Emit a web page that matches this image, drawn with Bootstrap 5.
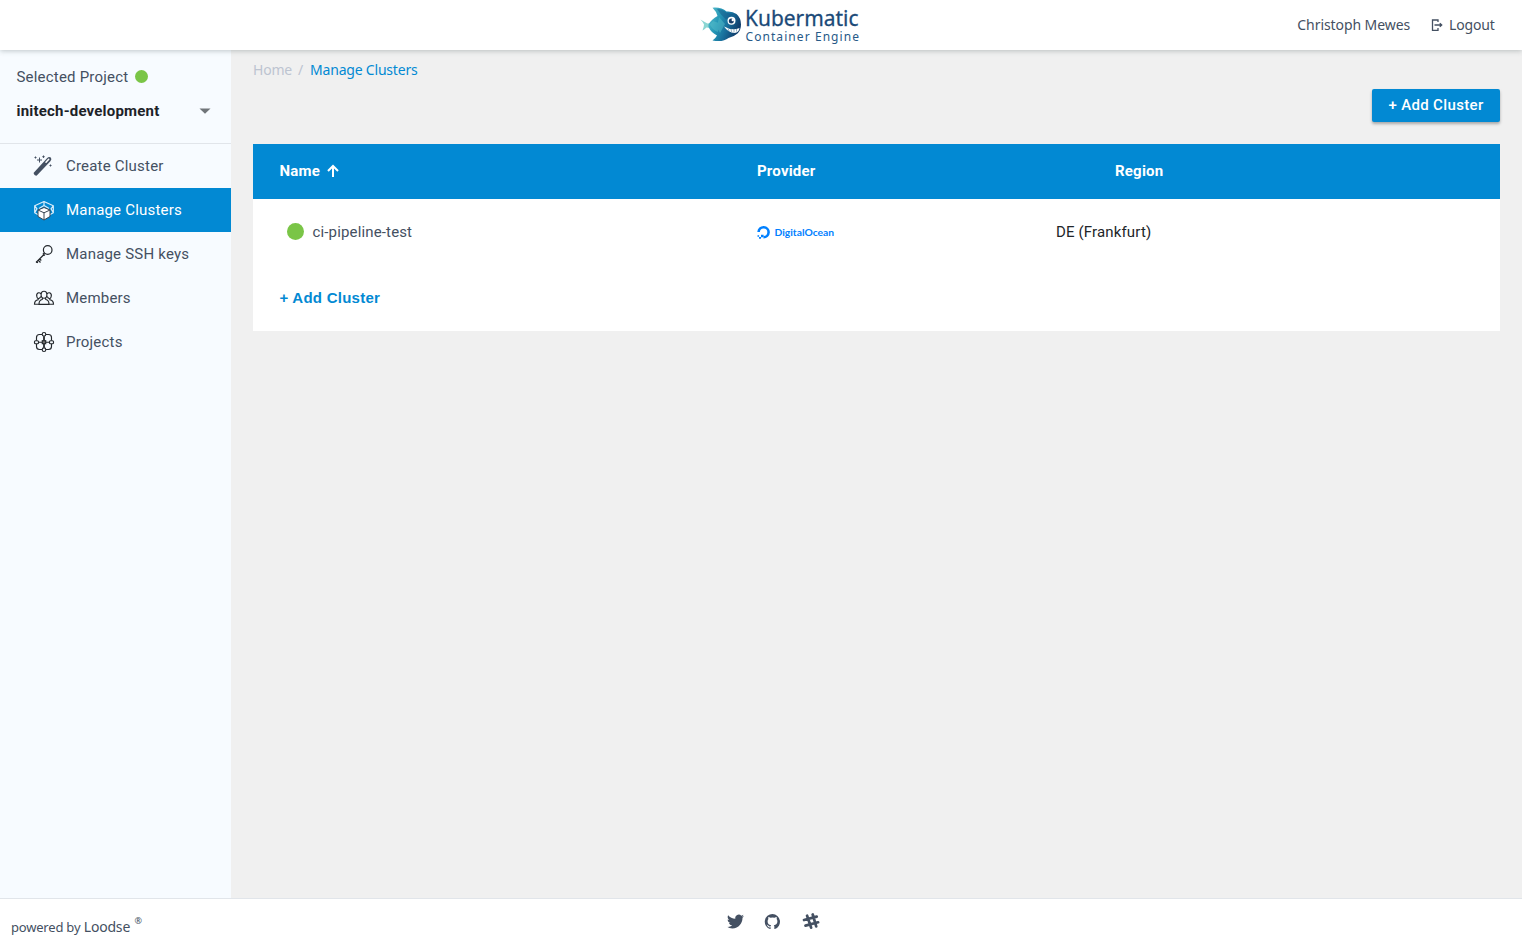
<!DOCTYPE html>
<html lang="en">
<head>
<meta charset="utf-8">
<meta name="viewport" content="width=device-width, initial-scale=1">
<title>Kubermatic Container Engine</title>
<link href="https://cdn.jsdelivr.net/npm/bootstrap@5.3.0/dist/css/bootstrap.min.css" rel="stylesheet">
<style>
:root{--kb:#0289d3;--ink:#445062}
body{font-family:Roboto,"Liberation Sans",sans-serif;font-size:15px;line-height:20px;color:var(--ink);background:#f0f0f0;letter-spacing:.2px}
a{text-decoration:none;color:inherit}
svg{display:block;flex:none}
.soft{font-family:"Noto Sans","Open Sans",sans-serif;font-size:14px;letter-spacing:-.2px}
.topbar{height:50px;background:#fff;box-shadow:0 1px 5px rgba(60,80,80,.3);z-index:2;display:grid;grid-template-columns:700px 160px 1fr}
.wordmark{font-family:"Noto Sans",sans-serif;letter-spacing:0}
.side{width:231px;background:#f7fbff}
.project{height:94px;padding:17px 16.5px 0;border-bottom:1px solid #e1e5ea}
.dot{display:inline-block;border-radius:50%;background:#7ac547}
.side .nav-link{height:44px;padding:0 0 0 32px;color:var(--ink);display:flex;align-items:center;gap:10px}
.side .nav-link.active{background:var(--kb);color:#fff}
.main{padding:10px 22px 0}
.addbtn{background:var(--kb);color:#fff;width:128px;height:33px;border-radius:2px;font-size:15px;font-weight:500;padding:0;line-height:31px;box-shadow:0 2px 3px rgba(0,0,0,.3);border:0;letter-spacing:.35px}
.gridrow{display:grid;grid-template-columns:477.5px 299px 1fr;padding-left:26.5px;align-items:center}
.thead{height:55px;background:var(--kb);color:#fff;font-weight:700;padding-bottom:2px}
.foot{height:45px;border-top:1px solid #e1e5ea;background:#fff;display:grid;grid-template-columns:726.5px 1fr}
</style>
</head>
<body>
<div class="d-flex flex-column vh-100 overflow-hidden">
<header class="topbar position-relative flex-shrink-0">
  <span></span>
  <svg width="160" height="50" viewBox="0 0 160 50" role="img">
    <defs><linearGradient id="fish" x1="0" y1="0" x2="1" y2=".4"><stop offset="0" stop-color="#5fc4cf"/><stop offset=".4" stop-color="#2496b6"/><stop offset=".7" stop-color="#186d9a"/><stop offset="1" stop-color="#103e6c"/></linearGradient></defs>
    <path fill="#8bd6d3" d="M.5 19.500q4 2.500 7 4l3-.5v5l-4-.5q-2 2-4 3 1.500-4 1.500-6-1-2.500-3.500-5z"/>
    <path fill="url(#fish)" d="M8.500 24.500q3-5.500 9-8.500-1-4.500-5-8.300 9-.7 14 3.800 6-.5 10 2.500 4.500 4 4.500 10.500 0 5.500-3.500 9-4 3.500-9 4.500-5.500 4.500-16 2.500 3-2 4.500-5-6-3-8.500-8.500z"/>
    <path fill="#55bdca" opacity=".5" d="M13 21l6 2-1 9q-6-2-8-7.500zM19 17l6 7-5 9-3-6z"/>
    <path fill="#135382" opacity=".45" d="M17 9q6 0 9 3.500l8 2-8 5-5-5z"/>
    <circle cx="31.500" cy="20.800" r="4" fill="#fff"/><circle cx="31.300" cy="21" r="2.500" fill="#173c67"/><circle cx="32.800" cy="20" r="1.200" fill="#fff"/>
    <path d="M24 26.500q8 4.500 15.500 1.500-.5 4.500-5 5-6 0-10.500-6.500z" fill="#fff"/><path d="M28 28.500l1 2.500m2-2l.7 3m2.300-3v3.500m2.500-4v3" stroke="#2d688f" stroke-width=".5"/>
  <g class="wordmark"><text x="45" y="25.700" textLength="113.500" lengthAdjust="spacingAndGlyphs" font-size="22.500" fill="#1b4a78" stroke="#1b4a78" stroke-width=".3">Kubermatic</text>
    <text x="45.500" y="41" textLength="113.500" font-size="12" fill="#285a88">Container Engine</text></g>
  </svg>
  <nav class="d-flex align-items-center justify-content-end soft" style="padding-right:27.5px">
    <a href="#" style="letter-spacing:-.08px">Christoph Mewes</a>
    <a href="#" class="d-flex align-items-center" style="margin-left:21px"><svg width="12" height="12" viewBox="0 0 12 12" fill="none" stroke="#445062" stroke-width="1.300"><path d="M7 3V1H1.500v10.300H7V9M3.500 6H10.500M8.800 4.300l1.900 1.700-1.900 1.700"/></svg><span style="margin-left:6px">Logout</span></a>
  </nav>
</header>
<div class="d-flex flex-grow-1">
  <aside class="side flex-shrink-0">
    <div class="project">
      <div class="d-flex align-items-center">Selected Project<span class="dot" style="width:13px;height:13px;margin:-1px 0 0 7px"></span></div>
      <div class="d-flex align-items-center justify-content-between fw-bold" style="color:#1d2228;margin-top:14px;padding-right:4px"><span>initech-development</span><svg width="12" height="6" viewBox="0 0 12 6" style="margin-top:-1px"><path fill="#707579" d="M.5.500h11L6 5.700z"/></svg></div>
    </div>
    <nav class="nav flex-column flex-nowrap">
      <a class="nav-link" href="#"><svg width="24" height="24" viewBox="0 0 24 24"><path d="M1.500 19L15 4.200q2-2 3.800-.6 1.400 1.700-.4 3.700L4.800 21.600q-2.400.6-3.300-2.600z" fill="#445062"/><path d="M14 8.200l2.700-3" stroke="#fff" stroke-width="1.500" stroke-linecap="round"/><path d="M7.500 3.500v5M5 6h5M11.500 1.500v2.400M10.300 2.700h2.400M3.500 2.500v2M2.500 3.500h2M18.500 10.500v2M17.500 11.500h2" stroke="#445062" stroke-width="1"/></svg><span>Create Cluster</span></a>
      <a class="nav-link active" href="#"><svg width="24" height="24" viewBox="0 0 24 24" stroke-linejoin="round"><path d="M12 3.500l9.300 4.300-2.300 3 2.300 4-9.300 5.200-9.300-5.200 2.300-4-2.300-3zM12 3.500v4M2.700 7.800v7M21.300 7.800v7M7 10.500l5-3 5 3" fill="none" stroke="#dceefa" stroke-width="1.200"/><path d="M12 9.500l6 2.500v6.500l-6 3.500-6-3.500V12z" fill="#fff" stroke="#3b4652" stroke-width="1"/><path d="M6 12l6 2.800 6-2.800M12 14.800v7" fill="none" stroke="#3b4652" stroke-width="1"/></svg><span>Manage Clusters</span></a>
      <a class="nav-link" href="#"><svg width="24" height="24" viewBox="0 0 24 24" fill="none" stroke="#24282d" stroke-width="1.200"><circle cx="15.700" cy="8" r="4.300"/><path d="M12.500 11L11 12.500M12 12.500l-8 8M10.800 11.500l2 2M4 19.800l2 1M6 18l2.500 2.500M7.500 16.800l1.800 1.700"/></svg><span>Manage SSH keys</span></a>
      <a class="nav-link" href="#"><svg width="24" height="24" viewBox="0 0 24 24" fill="none" stroke="#24282d" stroke-width="1.150"><ellipse cx="12" cy="8.700" rx="2.900" ry="3.500"/><path d="M10.500 12l-.3 1.500Q7 14 7 18.400h10Q17 14 13.800 13.500l-.3-1.500M9 7.800Q8 6.600 6.500 6.800 4.300 7.500 4.700 10q.3 2 1.500 2.700v1Q2.500 14.300 2.500 18.200H7M6.200 12.700Q8 12.600 8.800 10.500M15 7.800q1-1.200 2.500-1 2.200.7 1.800 3.200-.3 2-1.500 2.700v1q3.700.6 3.700 4.500H17m.8-5.500q-1.800-.1-2.600-2.200"/></svg><span>Members</span></a>
      <a class="nav-link" href="#"><svg width="24" height="24" viewBox="0 0 24 24" fill="none" stroke="#24282d" stroke-width="1.150"><path d="M10 4.500H7.500Q4.500 4.500 4.500 7.500v3M4.500 14v2.500q0 3 3 3H10M14 4.500h2.500q3 0 3 3v3M19.500 14v2.500q0 3-3 3H14M6.500 12.200H10M14 12.200h3.500"/><path d="M12 6.300v4.200M12 14v3.700" stroke-width="1.800"/><circle cx="12" cy="4.300" r="1.800"/><circle cx="12" cy="19.700" r="1.800"/><rect x="2.500" y="10.700" width="4" height="3" rx="1"/><rect x="17.500" y="10.700" width="4" height="3" rx="1"/><rect x="10.300" y="10.700" width="3.400" height="3" fill="#777"/></svg><span>Projects</span></a>
    </nav>
  </aside>
  <main class="main flex-grow-1">
    <nav class="soft"><a href="#" style="color:#bdc4d1">Home</a><span style="color:#bdc4d1;margin:0 7px 0 6px">/</span><a href="#" style="color:var(--kb)">Manage Clusters</a></nav>
    <div class="d-flex justify-content-end" style="margin-top:9px"><button class="btn addbtn">+ Add Cluster</button></div>
    <section class="bg-white" style="margin-top:22px;height:187px">
      <div class="gridrow thead"><div class="d-flex align-items-center">Name<svg width="12" height="14" viewBox="0 0 12 14" fill="none" stroke="#fff" stroke-width="2" style="margin-left:7px"><path d="M6 13V2M1 7l5-5 5 5"/></svg></div><div>Provider</div><div style="padding-left:59px">Region</div></div>
      <div class="gridrow" style="height:66px"><div class="d-flex align-items-center"><span class="dot" style="width:17px;height:17px;margin:-1px 8.500px 0 7.500px"></span><span style="letter-spacing:.15px">ci-pipeline-test</span></div>
        <svg width="78" height="14" viewBox="0 0 78 14"><path d="M6.500 12.200A5 5 0 1 0 1.600 7" fill="none" stroke="#0080ff" stroke-width="2.600"/><path fill="#0080ff" d="M4 9.700h2.600v2.600H4zM2 11.900h2v1.800H2zM.5 10.200h1.600v1.600H.5z"/><text x="17.500" y="10.900" textLength="59.500" lengthAdjust="spacingAndGlyphs" font-family="Lato,sans-serif" font-size="10" font-weight="700" fill="#0080ff" letter-spacing="0">DigitalOcean</text></svg>
        <div style="color:#212529;letter-spacing:.15px">DE (Frankfurt)</div></div>
      <a href="#" class="d-inline-block fw-bold" style="font-family:'Liberation Sans',sans-serif;color:var(--kb);margin:23px 0 0 26.500px;letter-spacing:.25px">+ Add Cluster</a>
    </section>
  </main>
</div>
<footer class="foot flex-shrink-0">
  <div class="soft" style="padding:18px 0 0 11px"><span style="font-size:13px">powered by</span> Loodse <sup style="font-size:9px;top:-8px;margin-left:1px">®</sup></div>
  <div class="d-flex" style="padding-top:14px;gap:20.500px">
    <svg width="17" height="17" viewBox="0 0 24 24" fill="#445062"><path d="M23.950 4.570a10 10 0 0 1-2.820.78 4.960 4.960 0 0 0 2.160-2.730c-.95.56-2 .96-3.120 1.190a4.920 4.920 0 0 0-8.390 4.480C7.690 8.100 4.070 6.130 1.640 3.160a4.820 4.820 0 0 0-.67 2.480c0 1.710.87 3.210 2.190 4.100a4.900 4.900 0 0 1-2.230-.62v.06a4.920 4.920 0 0 0 3.950 4.830 5 5 0 0 1-2.210.08 4.940 4.940 0 0 0 4.600 3.420A9.870 9.870 0 0 1 0 19.540a13.990 13.990 0 0 0 7.550 2.210c9.140 0 14.300-7.720 14.300-14.300v-.65a10 10 0 0 0 2.460-2.550z"/></svg>
    <svg width="17" height="17" viewBox="0 0 24 24" fill="#445062"><path d="M12 1.300A11 11 0 0 0 8.500 22.700c.6.100.8-.2.800-.5v-2c-3.100.7-3.800-1.300-3.800-1.300-.5-1.300-1.200-1.700-1.200-1.700-1-.7.100-.7.100-.7 1.100.1 1.700 1.200 1.700 1.200 1 1.700 2.600 1.200 3.300.9.100-.7.400-1.200.7-1.500-2.500-.3-5-1.200-5-5.500 0-1.200.4-2.200 1.100-3-.1-.3-.5-1.500.1-3 0 0 .9-.3 3 1.100a10 10 0 0 1 5.400 0c2.100-1.400 3-1.100 3-1.100.6 1.500.2 2.700.1 3 .7.800 1.100 1.800 1.100 3 0 4.300-2.600 5.200-5.100 5.500.4.300.8 1 .8 2v3c0 .3.200.6.800.5A11 11 0 0 0 12 1.300z"/></svg>
    <svg width="18" height="17" viewBox="0 0 18 17" fill="none" stroke="#445062" stroke-width="2.700" stroke-linecap="round"><path d="M5.100 2.700l4 11.900M10.700 1.500l3.500 11.900M2 7L14.700 3.600M3.500 12.600l12.600-3.300"/></svg>
  </div>
</footer>
</div>
<script src="https://cdn.jsdelivr.net/npm/bootstrap@5.3.0/dist/js/bootstrap.bundle.min.js"></script>
</body>
</html>
